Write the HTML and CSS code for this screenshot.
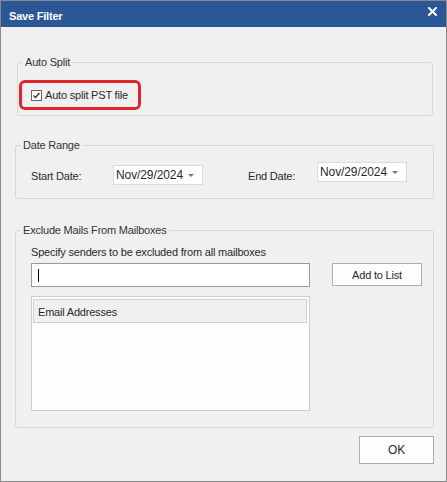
FILE: index.html
```html
<!doctype html>
<html lang="en">
<head>
    <title>Save Filter</title>
    <meta charset="utf-8">
    <link rel="stylesheet" href="styles.css">
</head>
<body>
<div class="dialog">
    <div class="title-bar">
        <span class="title">Save Filter</span>
        <svg class="close" width="9" height="9" viewBox="0 0 9 9">
            <path d="M1 1L8 8M8 1L1 8" stroke="#fff" stroke-width="2" stroke-linecap="square"/>
        </svg>
    </div>

    <div class="content">
        <fieldset class="group group-split">
            <legend>Auto Split</legend>
            <label class="highlight">
                <svg class="check" width="11" height="11" viewBox="0 0 11 11">
                    <rect x="0.5" y="0.5" width="10" height="10" fill="#fff" stroke="#666"/>
                    <path d="M2.5 5.5L4.5 7.5L8.5 3" fill="none" stroke="#333" stroke-width="1.3"/>
                </svg>
                Auto split PST file
            </label>
        </fieldset>

        <fieldset class="group group-dates">
            <legend>Date Range</legend>
            <div class="date-row">
                <span class="date-label start-label">Start Date:</span>
                <div class="combo start-combo"><span>Nov/29/2024</span><i class="arrow"></i></div>
                <span class="date-label end-label">End Date:</span>
                <div class="combo"><span>Nov/29/2024</span><i class="arrow"></i></div>
            </div>
        </fieldset>

        <fieldset class="group group-exclude">
            <legend>Exclude Mails From Mailboxes</legend>
            <p class="hint">Specify senders to be excluded from all mailboxes</p>
            <div class="entry-row">
                <div class="text-box"><span class="caret"></span></div>
                <button class="btn add-btn">Add to List</button>
            </div>
            <div class="list-box">
                <div class="list-header">Email Addresses</div>
            </div>
        </fieldset>

        <div class="footer">
            <button class="btn ok-btn">OK</button>
        </div>
    </div>
</div>
</body>
</html>
```

FILE: styles.css
```css
html, body { margin: 0; padding: 0; }
body {
    font-family: "Liberation Sans", Arial, sans-serif;
    font-size: 11px;
    letter-spacing: -0.2px;
    color: #2a2a2a;
    background: #f0f0f0;
}
.dialog {
    width: 447px;
    height: 482px;
    box-sizing: border-box;
    border: 1px solid #8a8a8a;
    background: #f0f0f0;
}
.title-bar {
    height: 26px;
    background: #2b5797;
    display: flex;
    align-items: center;
    justify-content: space-between;
    padding: 0 9px 0 8px;
    color: #fff;
}
.title {
    font-size: 11px;
    font-weight: bold;
    letter-spacing: -0.2px;
    padding-top: 3px;
}
.close { margin-top: -6px; }

.content {
    padding: 0 12px 0 14px;
}
.group {
    margin: 0;
    padding: 0;
    border: 1px solid #d8d8d8;
    border-radius: 3px;
    min-width: 0;
}
.group legend {
    margin-left: -10px;
    padding: 0 2px;
    line-height: 14px;
    color: #333;
}

/* auto split */
.group-split {
    margin: 28px 1px 0 2px;
    padding: 11px 0 5px 1px;
}
.group-split legend { margin-left: 4px; }
.highlight {
    display: flex;
    align-items: center;
    gap: 3px;
    width: 122px;
    height: 30px;
    box-sizing: border-box;
    border: 3px solid #e0242e;
    border-radius: 6px;
    padding-left: 9px;
}
.check { flex: none; }

/* date range */
.group-dates {
    margin-top: 22px;
    padding: 10px 0 14px 15px;
}
.date-row {
    display: flex;
    align-items: flex-start;
    height: 22px;
}
.date-label {
    line-height: 22px;
    padding-top: 3px;
}
.start-label { width: 82px; }
.end-label { width: 69px; margin-left: 45px; }
.combo {
    width: 90px;
    height: 20px;
    box-sizing: border-box;
    border: 1px solid #dadada;
    background: #fff;
    display: flex;
    align-items: center;
    justify-content: space-between;
    padding: 0 8px 0 2px;
    font-size: 12px;
    letter-spacing: -0.1px;
}
.start-combo { margin-top: 3px; }
.arrow {
    width: 0;
    height: 0;
    border-left: 3px solid transparent;
    border-right: 3px solid transparent;
    border-top: 3px solid #777;
}

/* exclude mailboxes */
.group-exclude {
    margin-top: 24px;
    padding: 8px 0 16px 15px;
}
.hint {
    margin: 0;
    line-height: 14px;
}
.entry-row {
    display: flex;
    align-items: flex-start;
    margin-top: 4px;
}
.text-box {
    width: 279px;
    height: 24px;
    box-sizing: border-box;
    border: 1px solid #9a9a9a;
    background: #fff;
    padding: 5px 0 0 6px;
}
.caret {
    display: block;
    width: 1px;
    height: 13px;
    background: #000;
}
.btn {
    font: inherit;
    letter-spacing: inherit;
    color: #2a2a2a;
    background: #fdfdfd;
    border: 1px solid #adadad;
    padding: 0;
}
.add-btn {
    width: 90px;
    height: 23px;
    margin-left: 22px;
}
.list-box {
    width: 279px;
    height: 115px;
    box-sizing: border-box;
    margin-top: 9px;
    border: 1px solid #cdcdcd;
    background: #fdfdfd;
    padding: 2px 2px 0 1px;
}
.list-header {
    height: 24px;
    box-sizing: border-box;
    border: 1px solid #d0d0d0;
    background: #f0f0f0;
    line-height: 24px;
    padding-left: 4px;
}

.footer {
    display: flex;
    justify-content: flex-end;
    margin-top: 8px;
}
.ok-btn {
    width: 75px;
    height: 28px;
    font-size: 12px;
}
```
